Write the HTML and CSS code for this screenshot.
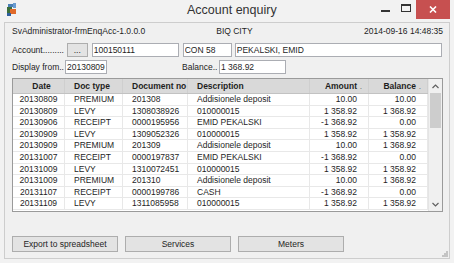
FILE: index.html
```html
<!DOCTYPE html>
<html>

<head>
  <meta charset="UTF-8">
  <title>Account enquiry</title>
  <link rel="stylesheet" href="styles.css">
</head>

<body>
  <div class="window">
    <div class="titlebar">
      <div class="app-icon">
        <svg width="11" height="13" viewBox="0 0 11 13">
          <rect x="2" y="1" width="6" height="3" fill="#4a7fb5"/>
          <rect x="7" y="0" width="3" height="5" fill="#6a9bd0"/>
          <rect x="1" y="4" width="5" height="6" fill="#3b6e3a"/>
          <rect x="4" y="6" width="6" height="5" fill="#e06a2a"/>
          <rect x="1" y="10" width="4" height="3" fill="#2f5f9e"/>
        </svg>
      </div>
      <div class="title">Account enquiry</div>
      <div class="caption-btns">
        <div class="cap-btn cap-min"><span class="min-line"></span></div>
        <div class="cap-btn cap-max"><span class="max-box"></span></div>
        <div class="cap-btn cap-close">
          <svg width="8" height="7" viewBox="0 0 8 7">
            <path d="M1 0.5 L7 6.5 M7 0.5 L1 6.5" stroke="#fff" stroke-width="1.6"/>
          </svg>
        </div>
      </div>
    </div>

    <div class="client">
      <div class="info-row">
        <span class="app-name">SvAdministrator-frmEnqAcc-1.0.0.0</span>
        <span class="org-name">BIQ CITY</span>
        <span class="stamp">2014-09-16 14:48:35</span>
      </div>

      <div class="field-row">
        <span class="lbl lbl-account">Account.........</span>
        <button class="btn btn-dots">...</button>
        <input class="txt txt-account" type="text" value="100150111">
        <input class="txt txt-con" type="text" value="CON 58">
        <input class="txt txt-name" type="text" value="PEKALSKI, EMID">
      </div>

      <div class="field-row row-from">
        <span class="lbl lbl-from">Display from..</span>
        <input class="txt txt-from" type="text" value="20130809">
        <span class="lbl lbl-balance">Balance..</span>
        <input class="txt txt-balance" type="text" value="1 368.92">
      </div>

      <div class="grid">
        <div class="grid-body">
          <div class="grid-row grid-head">
            <div class="cell c-date">Date</div>
            <div class="cell c-type">Doc type</div>
            <div class="cell c-doc">Document no</div>
            <div class="cell c-desc">Description</div>
            <div class="cell c-num">Amount<span class="sort-mark">.</span></div>
            <div class="cell c-num">Balance<span class="sort-mark">.</span></div>
          </div>
          <div class="grid-row">
            <div class="cell c-date">20130809</div><div class="cell c-type">PREMIUM</div><div class="cell c-doc">201308</div>
            <div class="cell c-desc">Addisionele deposit</div><div class="cell c-num">10.00</div><div class="cell c-num">10.00</div>
          </div>
          <div class="grid-row">
            <div class="cell c-date">20130809</div><div class="cell c-type">LEVY</div><div class="cell c-doc">1308038926</div>
            <div class="cell c-desc">010000015</div><div class="cell c-num">1 358.92</div><div class="cell c-num">1 368.92</div>
          </div>
          <div class="grid-row">
            <div class="cell c-date">20130906</div><div class="cell c-type">RECEIPT</div><div class="cell c-doc">0000195956</div>
            <div class="cell c-desc">EMID PEKALSKI</div><div class="cell c-num">-1 368.92</div><div class="cell c-num">0.00</div>
          </div>
          <div class="grid-row">
            <div class="cell c-date">20130909</div><div class="cell c-type">LEVY</div><div class="cell c-doc">1309052326</div>
            <div class="cell c-desc">010000015</div><div class="cell c-num">1 358.92</div><div class="cell c-num">1 358.92</div>
          </div>
          <div class="grid-row">
            <div class="cell c-date">20130909</div><div class="cell c-type">PREMIUM</div><div class="cell c-doc">201309</div>
            <div class="cell c-desc">Addisionele deposit</div><div class="cell c-num">10.00</div><div class="cell c-num">1 368.92</div>
          </div>
          <div class="grid-row">
            <div class="cell c-date">20131007</div><div class="cell c-type">RECEIPT</div><div class="cell c-doc">0000197837</div>
            <div class="cell c-desc">EMID PEKALSKI</div><div class="cell c-num">-1 368.92</div><div class="cell c-num">0.00</div>
          </div>
          <div class="grid-row">
            <div class="cell c-date">20131009</div><div class="cell c-type">LEVY</div><div class="cell c-doc">1310072451</div>
            <div class="cell c-desc">010000015</div><div class="cell c-num">1 358.92</div><div class="cell c-num">1 358.92</div>
          </div>
          <div class="grid-row">
            <div class="cell c-date">20131009</div><div class="cell c-type">PREMIUM</div><div class="cell c-doc">201310</div>
            <div class="cell c-desc">Addisionele deposit</div><div class="cell c-num">10.00</div><div class="cell c-num">1 368.92</div>
          </div>
          <div class="grid-row">
            <div class="cell c-date">20131107</div><div class="cell c-type">RECEIPT</div><div class="cell c-doc">0000199786</div>
            <div class="cell c-desc">CASH</div><div class="cell c-num">-1 368.92</div><div class="cell c-num">0.00</div>
          </div>
          <div class="grid-row">
            <div class="cell c-date">20131109</div><div class="cell c-type">LEVY</div><div class="cell c-doc">1311085958</div>
            <div class="cell c-desc">010000015</div><div class="cell c-num">1 358.92</div><div class="cell c-num">1 358.92</div>
          </div>
        </div>

        <div class="vscroll">
          <div class="arrow">
            <svg width="7" height="5" viewBox="0 0 7 5"><path d="M0.5 4 L3.5 1 L6.5 4" fill="none" stroke="#606060" stroke-width="1.2"/></svg>
          </div>
          <div class="track"><div class="thumb"></div></div>
          <div class="arrow">
            <svg width="7" height="5" viewBox="0 0 7 5"><path d="M0.5 1 L3.5 4 L6.5 1" fill="none" stroke="#606060" stroke-width="1.2"/></svg>
          </div>
        </div>
      </div>

      <div class="actions">
        <button class="btn btn-action">Export to spreadsheet</button>
        <button class="btn btn-action">Services</button>
        <button class="btn btn-action">Meters</button>
      </div>

      <div class="grip">
        <svg width="6" height="6" viewBox="0 0 6 6">
          <rect x="4" y="0" width="2" height="2" fill="#c4c4c4"/>
          <rect x="2" y="2" width="2" height="2" fill="#c4c4c4"/>
          <rect x="4" y="2" width="2" height="2" fill="#c4c4c4"/>
          <rect x="0" y="4" width="2" height="2" fill="#c4c4c4"/>
          <rect x="2" y="4" width="2" height="2" fill="#c4c4c4"/>
          <rect x="4" y="4" width="2" height="2" fill="#c4c4c4"/>
        </svg>
      </div>
    </div>
  </div>
</body>

</html>
```

FILE: styles.css
```css
* {
  margin: 0;
  padding: 0;
  box-sizing: border-box;
}

body {
  font-family: "Liberation Sans", Arial, sans-serif;
  font-size: 8.5px;
  color: #1e1e1e;
  background: #f2f2f2;
}

/* window frame */
.window {
  width: 454px;
  height: 263px;
  background: #f2f2f2;
  display: flex;
  flex-direction: column;
}

.titlebar {
  height: 22px;
  display: flex;
  align-items: flex-start;
}

.app-icon {
  width: 22px;
  padding: 3px 0 0 6px;
}

.title {
  margin-left: 165px;
  padding-top: 2px;
  font-size: 12.5px;
  color: #333;
  line-height: 16px;
}

.caption-btns {
  margin-left: auto;
  margin-right: 4px;
  display: flex;
}

.cap-btn {
  height: 19px;
  display: flex;
  align-items: center;
  justify-content: center;
}

.cap-min {
  width: 19px;
  align-items: flex-start;
  padding-top: 10px;
}

.min-line {
  display: block;
  width: 9px;
  height: 2px;
  background: #333;
}

.cap-max {
  width: 21px;
  align-items: flex-start;
  padding-top: 4px;
}

.max-box {
  display: block;
  width: 10px;
  height: 8px;
  border: 1px solid #333;
  border-top-width: 2px;
}

.cap-close {
  width: 34px;
  background: #c75050;
}

/* client area */
.client {
  position: relative;
  height: 237px;
  margin: 0 4px;
  border: 1px solid #cdcdcd;
  background: #f0f0f0;
  padding: 2px 7px 0;
}

.info-row {
  height: 12px;
  line-height: 12px;
  display: flex;
}

.org-name {
  margin-left: 71px;
}

.stamp {
  margin-left: auto;
  margin-right: -1px;
}

.field-row {
  margin-top: 6px;
  height: 14px;
  display: flex;
  align-items: center;
}

.row-from {
  margin-top: 3px;
}

.lbl {
  white-space: nowrap;
  line-height: 14px;
}

.lbl-account {
  width: 55px;
}

.lbl-from {
  width: 53px;
}

.lbl-balance {
  width: 37px;
  margin-left: 75px;
}

.txt {
  height: 14px;
  border: 1px solid #abadb3;
  background: #fff;
  font-family: inherit;
  font-size: 8.5px;
  color: #1e1e1e;
  padding: 0 1px;
  outline: none;
}

.txt-account {
  width: 87px;
  margin-left: 4px;
}

.txt-con {
  width: 49px;
  margin-left: 4px;
}

.txt-name {
  width: 208px;
  margin-left: 3px;
}

.txt-from {
  width: 42px;
}

.txt-balance {
  width: 67px;
}

.btn {
  font-family: inherit;
  font-size: 8.5px;
  color: #1e1e1e;
  background: #e3e3e3;
  border: 1px solid #adadad;
}

.btn-dots {
  width: 21px;
  height: 14px;
  line-height: 10px;
}

/* data grid */
.grid {
  margin-top: 4px;
  width: 431px;
  height: 134px;
  border: 1px solid #9a9a9a;
  background: #fff;
  display: flex;
  overflow: hidden;
}

.grid-body {
  width: 415px;
}

.grid-row {
  display: grid;
  grid-template-columns: 52px 58px 65px 122px 59px 59px;
  height: 11.6px;
  line-height: 11px;
  border-bottom: 1px solid #e8e8e8;
}

.grid-head {
  height: 15px;
  line-height: 14px;
  background: #d9d9d9;
  border-bottom: 1px solid #c2c2c2;
  font-weight: bold;
}

.cell {
  border-right: 1px solid #e8e8e8;
  padding-left: 9px;
  white-space: nowrap;
  overflow: hidden;
}

.grid-head .cell {
  border-right-color: #cfcfcf;
}

.c-date {
  text-align: center;
  padding-left: 0;
}

.grid-head .c-date {
  padding-left: 6px;
}

.c-num {
  text-align: right;
  padding-left: 0;
  padding-right: 11px;
}

.grid-head .c-num {
  padding-right: 3px;
}

.sort-mark {
  display: inline-block;
  width: 8px;
  text-align: center;
  font-weight: normal;
  color: #777;
}

.vscroll {
  width: 14px;
  background: #f0f0f0;
  border-left: 1px solid #e4e4e4;
  display: flex;
  flex-direction: column;
}

.arrow {
  height: 14px;
  display: flex;
  align-items: center;
  justify-content: center;
}

.track {
  flex: 1;
}

.thumb {
  height: 35px;
  margin: 0 1px;
  background: #cdcdcd;
}

/* bottom buttons */
.actions {
  margin-top: 24px;
  display: flex;
  gap: 7px;
}

.btn-action {
  width: 106px;
  height: 16px;
}

.grip {
  position: absolute;
  right: 1px;
  bottom: 1px;
  line-height: 0;
}
```
